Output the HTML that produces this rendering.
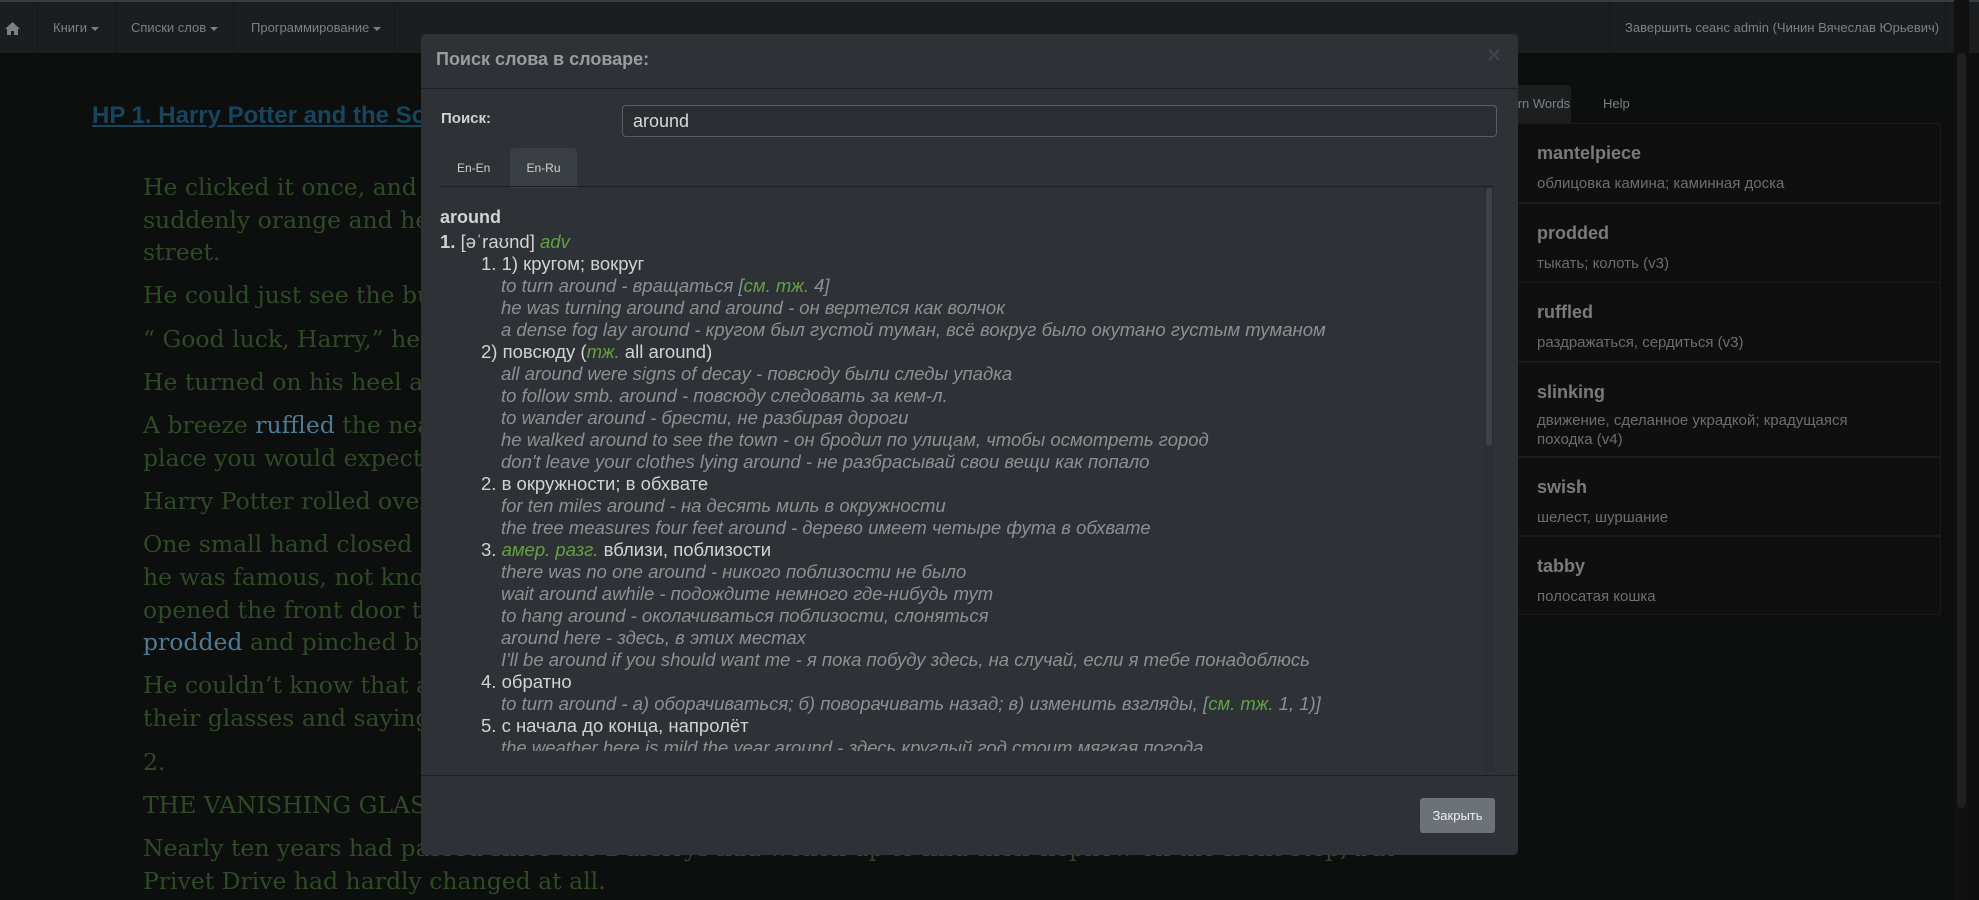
<!DOCTYPE html>
<html><head><meta charset="utf-8"><style>
*{margin:0;padding:0;box-sizing:border-box}
html,body{width:1979px;height:900px;overflow:hidden;background:#0d0e0e;font-family:"Liberation Sans",Arial,sans-serif}
.nav{position:absolute;left:0;top:0;width:1979px;height:53px;background:#1b1d1f;border-top:2px solid #3a3d40}
.nav .it{position:absolute;top:0;height:51px;line-height:51px;color:#7d7f81;font-size:13px;border-left:1px solid #15171a}
.car{display:inline-block;width:0;height:0;border-left:4px solid transparent;border-right:4px solid transparent;border-top:4px solid #7d7f81;vertical-align:middle;margin-left:4px}
.story{position:absolute;left:143px;font-family:"DejaVu Serif",serif;font-size:23.5px;color:#2f4a26;white-space:nowrap}
.title{position:absolute;left:92px;top:102px;font-size:24px;font-weight:bold;color:#17455e;text-decoration:underline}
.rp{position:absolute;left:1500px;width:441px;border:1px solid #1a1a1a;background:#0f0f0f}
.rp .w{position:absolute;left:36px;font-size:18px;font-weight:bold;color:#7a7a7a}
.rp .m{position:absolute;left:36px;font-size:15px;color:#6d6d6d;line-height:19px}
.modal{position:absolute;left:421px;top:34px;width:1097px;height:821px;background:#2e3236;border-radius:5px}
.dict{position:absolute;left:19px;top:172px;font-size:18.5px;line-height:22px;color:#d2d2d2;white-space:nowrap}
.dict div{height:22px}
.l2{padding-left:41px}.ex{padding-left:61px;font-style:italic;color:#8d9093}
.g{color:#64a043;font-style:italic}
</style></head><body>
<div class="title">HP 1. Harry Potter and the Sorcerer's Stone</div>
<div class="story" style="top:173px">He clicked it once, and twelve balls of light sped back to their street lamps so that Privet Drive glowed</div>
<div class="story" style="top:206px">suddenly orange and he could make out a tabby cat slinking around the corner at the other end of the</div>
<div class="story" style="top:238px">street.</div>
<div class="story" style="top:281px">He could just see the bundle of blankets on the step of number four.</div>
<div class="story" style="top:325px">“ Good luck, Harry,” he murmured.</div>
<div class="story" style="top:368px">He turned on his heel and with a swish of his cloak, he was gone.</div>
<div class="story" style="top:411px">A breeze <span style="color:#4f7a93">ruffled</span> the neat hedges of Privet Drive, which lay silent and tidy under the inky sky, the very last</div>
<div class="story" style="top:444px">place you would expect astonishing things to happen.</div>
<div class="story" style="top:487px">Harry Potter rolled over inside his blankets without waking up.</div>
<div class="story" style="top:530px">One small hand closed on the letter beside him and he slept on, not knowing he was special, not knowing</div>
<div class="story" style="top:563px">he was famous, not knowing he would be woken in a few hours' time by Mrs. Dursley's scream as she</div>
<div class="story" style="top:596px">opened the front door to put out the milk bottles, nor that he would spend the next few weeks being</div>
<div class="story" style="top:628px"><span style="color:#4f7a93">prodded</span> and pinched by his cousin Dudley.</div>
<div class="story" style="top:671px">He couldn’t know that at this very moment, people meeting in secret all over the country were holding up</div>
<div class="story" style="top:704px">their glasses and saying in hushed voices: “To Harry Potter — the boy who lived!”</div>
<div class="story" style="top:748px">2.</div>
<div class="story" style="top:791px">THE VANISHING GLASS</div>
<div class="story" style="top:834px">Nearly ten years had passed since the Dursleys had woken up to find their nephew on the front step, but</div>
<div class="story" style="top:867px">Privet Drive had hardly changed at all.</div>

<div class="nav">
<div class="it" style="left:0;width:37px;border:none;padding-left:5px"><svg width="15" height="13" viewBox="0 0 15 13" style="vertical-align:middle"><path d="M7.5 0L0 7h2v6h4V9h3v4h4V7h2z" fill="#7d7f81"/></svg></div>
<div class="it" style="left:37px;padding-left:15px;width:78px">Книги<span class="car"></span></div>
<div class="it" style="left:115px;padding-left:15px;width:118px">Списки слов<span class="car"></span></div>
<div class="it" style="left:233px;padding-left:17px;width:161px">Программирование<span class="car"></span></div>
<div class="it" style="left:394px;width:1px"></div>
<div class="it" style="left:1609px;padding-left:15px;width:337px;border-right:1px solid #15171a">Завершить сеанс admin (Чинин Вячеслав Юрьевич)</div>
</div>

<div style="position:absolute;left:1460px;top:85px;width:111px;height:38px;background:#1c1e20;border-radius:4px 4px 0 0"></div>
<div style="position:absolute;left:1496px;top:96px;font-size:13px;color:#7d7f81">Learn Words</div>
<div style="position:absolute;left:1603px;top:96px;font-size:13px;color:#7d7f81">Help</div>
<div class="rp" style="top:123px;height:80px"><div class="w" style="top:19px">mantelpiece</div><div class="m" style="top:50px">облицовка камина; каминная доска</div></div>
<div class="rp" style="top:203px;height:80px"><div class="w" style="top:19px">prodded</div><div class="m" style="top:50px">тыкать; колоть (v3)</div></div>
<div class="rp" style="top:282px;height:80px"><div class="w" style="top:19px">ruffled</div><div class="m" style="top:50px">раздражаться, сердиться (v3)</div></div>
<div class="rp" style="top:362px;height:95px"><div class="w" style="top:19px">slinking</div><div class="m" style="top:48px">движение, сделанное украдкой; крадущаяся<br>походка (v4)</div></div>
<div class="rp" style="top:457px;height:79px"><div class="w" style="top:19px">swish</div><div class="m" style="top:50px">шелест, шуршание</div></div>
<div class="rp" style="top:536px;height:79px"><div class="w" style="top:19px">tabby</div><div class="m" style="top:50px">полосатая кошка</div></div>
<div style="position:absolute;left:1954px;top:0;width:15px;height:900px;background:#111"></div>
<div style="position:absolute;left:1957px;top:53px;width:9px;height:755px;background:#1e2022;border-radius:4px"></div>

<div class="modal">
<div style="position:absolute;left:15px;top:15px;font-size:18px;font-weight:bold;color:#9a9c9e">Поиск слова в словаре:</div>
<div style="position:absolute;left:1066px;top:8px;font-size:24px;font-weight:bold;color:#3f4347">×</div>
<div style="position:absolute;left:0;top:54px;width:1097px;height:1px;background:#1f2225"></div>
<div style="position:absolute;left:20px;top:76px;font-size:15px;font-weight:bold;color:#d0d0d0">Поиск:</div>
<div style="position:absolute;left:201px;top:71px;width:875px;height:32px;border:1px solid #5a5e62;border-radius:4px;background:#2a2e32;padding-left:10px;font-size:18px;line-height:30px;color:#d8d8d8">around</div>
<div style="position:absolute;left:36px;top:114px;font-size:12px;color:#d0d0d0;line-height:40px">En-En</div>
<div style="position:absolute;left:89px;top:114px;width:67px;height:40px;background:#3a3f44;border-radius:4px 4px 0 0;font-size:12px;color:#d0d0d0;line-height:40px;text-align:center">En-Ru</div>
<div style="position:absolute;left:19px;top:152px;width:1054px;height:1px;background:#1f2225"></div>
<div style="position:absolute;left:1063px;top:154px;width:10px;height:584px;background:#2b2f33"></div>
<div style="position:absolute;left:1065px;top:154px;width:6px;height:258px;background:#3e4246;border-radius:3px"></div>
<div class="dict">
<div style="font-weight:bold;font-size:18px;height:25px">around</div>
<div><b>1.</b> [əˈraʊnd] <span class="g">adv</span></div>
<div class="l2">1. 1) кругом; вокруг</div>
<div class="ex">to turn around - вращаться [<span class="g">см. тж.</span> 4]</div>
<div class="ex">he was turning around and around - он вертелся как волчок</div>
<div class="ex">a dense fog lay around - кругом был густой туман, всё вокруг было окутано густым туманом</div>
<div class="l2">2) повсюду (<span class="g">тж.</span> all around)</div>
<div class="ex">all around were signs of decay - повсюду были следы упадка</div>
<div class="ex">to follow smb. around - повсюду следовать за кем-л.</div>
<div class="ex">to wander around - брести, не разбирая дороги</div>
<div class="ex">he walked around to see the town - он бродил по улицам, чтобы осмотреть город</div>
<div class="ex">don't leave your clothes lying around - не разбрасывай свои вещи как попало</div>
<div class="l2">2. в окружности; в обхвате</div>
<div class="ex">for ten miles around - на десять миль в окружности</div>
<div class="ex">the tree measures four feet around - дерево имеет четыре фута в обхвате</div>
<div class="l2">3. <span class="g">амер. разг.</span> вблизи, поблизости</div>
<div class="ex">there was no one around - никого поблизости не было</div>
<div class="ex">wait around awhile - подождите немного где-нибудь тут</div>
<div class="ex">to hang around - околачиваться поблизости, слоняться</div>
<div class="ex">around here - здесь, в этих местах</div>
<div class="ex">I'll be around if you should want me - я пока побуду здесь, на случай, если я тебе понадоблюсь</div>
<div class="l2">4. обратно</div>
<div class="ex">to turn around - а) оборачиваться; б) поворачивать назад; в) изменить взгляды, [<span class="g">см. тж.</span> 1, 1)]</div>
<div class="l2">5. с начала до конца, напролёт</div>
<div class="ex" style="height:14px;overflow:hidden">the weather here is mild the year around - здесь круглый год стоит мягкая погода</div>
</div>
<div style="position:absolute;left:0;top:741px;width:1097px;height:1px;background:#1f2225"></div>
<div style="position:absolute;left:999px;top:764px;width:75px;height:35px;background:#6c7277;border-radius:3px;font-size:13px;color:#eee;line-height:35px;text-align:center">Закрыть</div>
</div>
</body></html>
